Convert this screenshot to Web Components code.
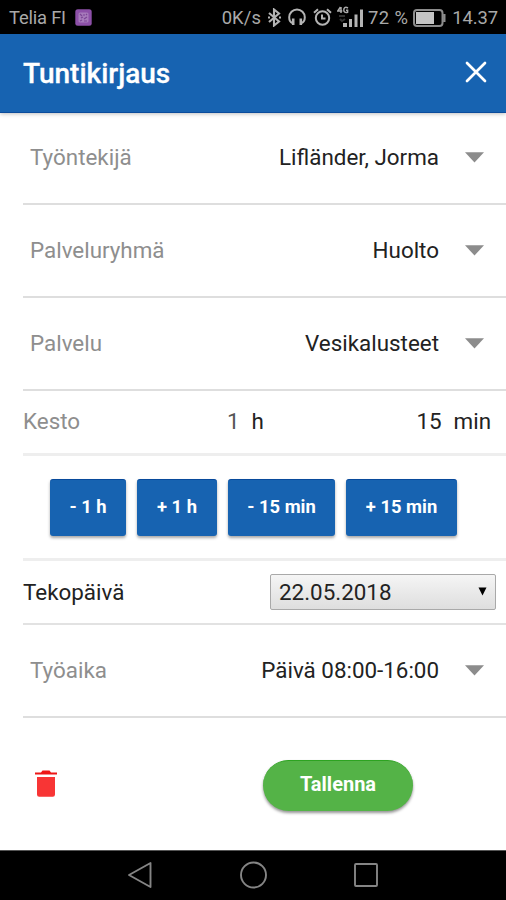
<!DOCTYPE html>
<html lang="fi">
<head>
<meta charset="utf-8">
<title>Tuntikirjaus</title>
<style>
  body { margin: 0; background: #fff; font-family: Roboto, "Liberation Sans", sans-serif; font-size: 22.4px; color: #222; }
</style>
</head>
<body>
<hour-entry-screen></hour-entry-screen>
<script>
const define = (name, html) => {
  const template = document.createElement('template');
  template.innerHTML = html;
  customElements.define(name, class extends HTMLElement {
    constructor() {
      super();
      this.attachShadow({ mode: 'open' }).append(template.content.cloneNode(true));
    }
  });
};

define('phone-status', `
<style>
  :host { display: flex; align-items: center; height: 34px; box-sizing: border-box; padding: 2px 8px 0 9px; background: #000; color: #a9a9a9; font-size: 18.4px; line-height: 32px; white-space: nowrap; }
  svg { display: block; flex: none; }
  .carrier { letter-spacing: -.2px; }
  .app { margin: -2px auto 0 9px; }
  .speed { letter-spacing: .1px; }
  .bt { margin: -2px 0 0 7px; }
  .hp { margin: -2px 0 0 7px; }
  .al { margin: -2px 0 0 7px; }
  .sig { margin: -3px 0 0 5px; }
  .pct { margin-left: 4px; letter-spacing: .4px; }
  .bat { margin: 0 6px 0 5px; }
  .time { letter-spacing: -.1px; }
</style>
<span class="carrier">Telia FI</span>
<svg class="app" width="17" height="17" viewBox="0 0 17 17"><rect x=".3" y=".3" width="16.4" height="16.4" rx="2.5" fill="#8d50a8"/><rect x="3.5" y="3.5" width="10" height="10" rx="1.5" fill="#a77bbb"/><path d="M5 5l2 2M8 6h2M11 5l1 1M6 9l2-1M5 12l2-1M9 10l3-2M9 12l3 0" stroke="#7b4595" stroke-width="1.2"/></svg>
<span class="speed">0K/s</span>
<svg class="bt" width="13" height="19" viewBox="0 0 13 19" fill="none" stroke="#b4b4b4" stroke-width="2.100"><path d="M1 5l10 8.500-5 4V1.500l5 4L1 14"/><path d="M0 9.500h2M11 9.500h2"/></svg>
<svg class="hp" width="18" height="18" viewBox="0 0 18 18" fill="none" stroke="#b4b4b4"><path d="M4.500 15.200C2.500 14.200 1.200 12 1.200 9.200A7.800 7.800 0 0 1 16.800 9.200c0 2.800-1.300 5-3.300 6" stroke-width="2"/><path d="M5.200 10.500v6.500M12.800 10.500v6.500" stroke-width="2.600"/></svg>
<svg class="al" width="19" height="18" viewBox="0 0 19 18" fill="none" stroke="#b4b4b4" stroke-width="2"><circle cx="9.500" cy="10" r="6.700"/><path d="M9 6.500v4h3.500M1 4.800L5 1.300M18 4.800L14 1.300"/></svg>
<svg class="sig" width="27" height="22" viewBox="0 0 27 22"><g fill="#b4b4b4"><rect x="6" y="17" width="4" height="4"/><rect x="12" y="13" width="3" height="8"/><rect x="17.500" y="8.500" width="3" height="12.500"/><rect x="23" y="3.500" width="3" height="17.500"/></g><path d="M3.500 1L.8 5h4.500M4 1v6M11 2C8 .3 6.800 2 6.800 4S8.300 7 10.600 6.200V4.200H9" fill="none" stroke="#aaa" stroke-width="1.500"/><path d="M2 10h6M3 13l2 2 3-2" fill="none" stroke="#333" stroke-width="2"/></svg>
<span class="pct">72 %</span>
<svg class="bat" width="33" height="18" viewBox="0 0 33 18"><rect x="1" y="1" width="28.500" height="16" rx="3" fill="none" stroke="#8c8c8c" stroke-width="2"/><rect x="3" y="3" width="18" height="12" fill="#c4c4c4"/><path d="M31.300 5v8" stroke="#8c8c8c" stroke-width="2.400"/></svg>
<span class="time">14.37</span>
`);

define('app-header', `
<style>
  :host { display: flex; align-items: center; justify-content: space-between; box-sizing: border-box; height: 79px; padding: 0 19px 0 23px; background: #1763b1; color: #fff; border-bottom: 1px solid #0c4c9c; box-shadow: 0 1px 4px rgba(0,0,0,.25); position: relative; }
  h1 { margin: 3px 0 0; font-size: 28px; font-weight: 500; line-height: 32px; -webkit-text-stroke: .3px #fff; }
  svg { display: block; margin-top: -2px; }
</style>
<h1><slot></slot></h1>
<svg width="22" height="22" viewBox="0 0 22 22" stroke="#fff" stroke-width="2.700" stroke-linecap="round"><path d="M2 2l18 18M20 2L2 20"/></svg>
`);

define('select-row', `
<style>
  :host { display: flex; align-items: center; box-sizing: border-box; height: 93px; margin-left: 23px; padding: 0 22px 0 7px; border-bottom: 2px solid #dedede; line-height: 28px; }
  span { padding-bottom: 1px; }
  .label { flex: 1; color: #8e8e8e; }
  svg { display: block; margin-left: 26px; }
</style>
<span class="label"><slot name="label"></slot></span>
<span><slot></slot></span>
<svg width="19" height="11" viewBox="0 0 19 11"><path d="M0 .3h19l-9.500 10.200z" fill="#8c8c8c"/></svg>
`);

define('duration-row', `
<style>
  :host { display: grid; grid-template-columns: 204px 1fr auto; align-items: center; box-sizing: border-box; height: 65px; margin-left: 23px; padding: 0 15px 2px 0; border-bottom: 3px solid #eee; line-height: 28px; }
  .label { color: #8e8e8e; }
  .pair { display: flex; gap: 12px; }
</style>
<span class="label">Kesto</span>
<span class="pair"><span style="color:#555">1</span><span>h</span></span>
<span class="pair"><span>15</span><span>min</span></span>
`);

define('step-button', `
<style>
  :host { display: flex; align-items: center; justify-content: center; width: var(--w); height: 57px; box-sizing: border-box; padding-bottom: 2px; border-radius: 3px; background: #1763b1; border-top: 1px solid #07499b; box-shadow: 0 2px 3px rgba(0,0,0,.34); color: #fff; font-size: 18.4px; font-weight: 700; }
</style>
<slot></slot>
`);

define('step-buttons', `
<style>
  :host { display: flex; gap: 11px; box-sizing: border-box; height: 106px; margin-left: 23px; padding: 23px 0 0 27px; border-bottom: 3px solid #eee; }
</style>
<step-button style="--w:76px">- 1 h</step-button>
<step-button style="--w:80px">+ 1 h</step-button>
<step-button style="--w:107px">- 15 min</step-button>
<step-button style="--w:111px">+ 15 min</step-button>
`);

define('date-row', `
<style>
  :host { display: flex; align-items: center; justify-content: space-between; box-sizing: border-box; height: 64px; margin-left: 23px; padding-right: 10px; border-bottom: 2px solid #e2e2e2; line-height: 28px; }
  .field { display: flex; align-items: center; justify-content: space-between; box-sizing: border-box; width: 226px; height: 36px; padding: 0 8px; border: 1.500px solid #a9a9a9; border-radius: 2px; background: linear-gradient(#f5f5f5, #dedede); }
  svg { display: block; margin-top: -2px; }
</style>
<span>Tekopäivä</span>
<div class="field"><span>22.05.2018</span><svg width="9" height="9" viewBox="0 0 9 9"><path d="M.5 .5h8L4.500 8.500z" fill="#000"/></svg></div>
`);

define('form-actions', `
<style>
  :host { display: flex; align-items: center; justify-content: space-between; box-sizing: border-box; height: 132px; padding: 2px 93px 0 35px; }
  .save { display: flex; align-items: center; justify-content: center; box-sizing: border-box; width: 150px; height: 51px; padding-bottom: 4px; border-radius: 26px; background: #54b347; border-top: 1px solid #2da321; box-shadow: 0 2px 3px rgba(0,0,0,.42); color: #fff; font-size: 20px; font-weight: 700; }
  svg { display: block; margin-top: -3px; }
</style>
<svg width="22" height="27" viewBox="0 0 22 27" fill="#f83535"><path d="M0 2.500h6l1.500-2h7l1.500 2h6V4.500H0z" fill="#ed1717"/><path d="M2 7h18v17.500a2.200 2.200 0 0 1-2.200 2.200H4.200A2.200 2.200 0 0 1 2 24.500z"/></svg>
<div class="save">Tallenna</div>
`);

define('phone-nav', `
<style>
  :host { display: flex; align-items: center; justify-content: center; gap: 86px; box-sizing: border-box; height: 50px; padding: 0 0 2px 0; background: #000; border-top: 1px solid #555; }
  svg { display: block; fill: none; stroke: #858585; stroke-width: 1.900; stroke-linejoin: round; }
</style>
<svg width="26" height="28" viewBox="0 0 26 28"><path d="M2 14L23.500 2v24z"/></svg>
<svg width="28" height="28" viewBox="0 0 28 28"><circle cx="14.500" cy="14" r="12.500"/></svg>
<svg width="26" height="28" viewBox="0 0 26 28"><rect x="2" y="3" width="22" height="22" rx="1"/></svg>
`);

define('hour-entry-screen', `
<style>
  :host { display: flex; flex-direction: column; width: 506px; height: 900px; overflow: hidden; }
  .first { height: 92px; }
</style>
<phone-status></phone-status>
<app-header>Tuntikirjaus</app-header>
<select-row class="first"><span slot="label">Työntekijä</span>Lifländer, Jorma</select-row>
<select-row><span slot="label">Palveluryhmä</span>Huolto</select-row>
<select-row><span slot="label">Palvelu</span>Vesikalusteet</select-row>
<duration-row></duration-row>
<step-buttons></step-buttons>
<date-row></date-row>
<select-row><span slot="label">Työaika</span>Päivä 08:00-16:00</select-row>
<form-actions></form-actions>
<phone-nav></phone-nav>
`);
</script>
</body>
</html>
